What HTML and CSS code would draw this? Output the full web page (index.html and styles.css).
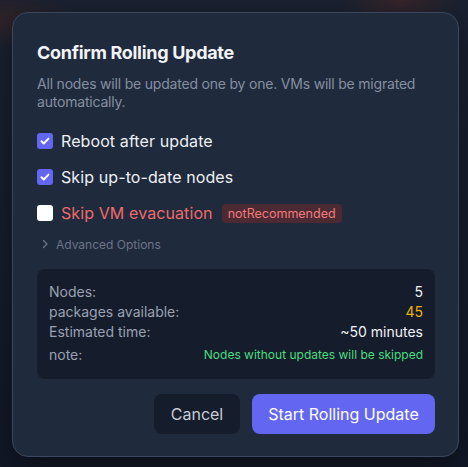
FILE: index.html
```html
<!DOCTYPE html>
<html>
<head>
<meta charset="utf-8">
<link rel="stylesheet" href="styles.css">
</head>
<body>
<div class="backdrop">
  <div class="dialog">
    <h2 class="title">Confirm Rolling Update</h2>
    <p class="desc">All nodes will be updated one by one. VMs will be migrated automatically.</p>
    <div class="options">
      <label class="opt">
        <span class="box checked"><svg viewBox="0 0 16 16" width="16" height="16"><path d="M4 8.3l2.6 2.6L12 5.3" fill="none" stroke="#fff" stroke-width="2.2" stroke-linecap="round" stroke-linejoin="round"/></svg></span>
        <span class="opt-label">Reboot after update</span>
      </label>
      <label class="opt">
        <span class="box checked"><svg viewBox="0 0 16 16" width="16" height="16"><path d="M4 8.3l2.6 2.6L12 5.3" fill="none" stroke="#fff" stroke-width="2.2" stroke-linecap="round" stroke-linejoin="round"/></svg></span>
        <span class="opt-label">Skip up-to-date nodes</span>
      </label>
      <label class="opt">
        <span class="box"></span>
        <span class="opt-label danger">Skip VM evacuation</span>
        <span class="badge">notRecommended</span>
      </label>
    </div>
    <div class="advanced">
      <svg viewBox="0 0 10 10" width="10" height="10"><path d="M3.5 1.5L7 5l-3.5 3.5" fill="none" stroke="#6b7588" stroke-width="1.3" stroke-linecap="round" stroke-linejoin="round"/></svg>
      <span>Advanced Options</span>
    </div>
    <div class="summary">
      <div class="row"><span>Nodes:</span><span class="val">5</span></div>
      <div class="row"><span>packages available:</span><span class="val warn">45</span></div>
      <div class="row"><span>Estimated time:</span><span class="val">~50 minutes</span></div>
      <div class="row note"><span>note:</span><span class="val ok">Nodes without updates will be skipped</span></div>
    </div>
    <div class="actions">
      <button class="btn cancel">Cancel</button>
      <button class="btn primary">Start Rolling Update</button>
    </div>
  </div>
</div>
</body>
</html>
```
FILE: styles.css
```css
* { box-sizing: border-box; }
html, body { margin: 0; padding: 0; }
body {
  width: 468px;
  height: 467px;
  overflow: hidden;
  font-family: Inter, "Noto Sans", sans-serif;
  background: #131a29;
}
.backdrop {
  width: 468px;
  height: 467px;
  padding: 12px 9px 10px 12px;
  background:
    radial-gradient(ellipse 60px 30px at 400px 0px, rgba(90,40,30,0.45), transparent),
    radial-gradient(ellipse 80px 30px at 0px 20px, rgba(70,35,30,0.5), transparent),
    linear-gradient(#1a2131, #121827);
}
.dialog {
  height: 100%;
  background: #1f2a3d;
  border: 1px solid #3a475c;
  border-radius: 16px;
  padding: 28px 23px 24px 24px;
  box-shadow: 0 10px 30px rgba(0,0,0,0.4);
}
.title {
  margin: 0;
  font-size: 18px;
  font-weight: 700;
  color: #f1f3f6;
  letter-spacing: -0.3px;
  line-height: 24px;
}
.desc {
  margin: 10px 0 0;
  font-size: 14px;
  line-height: 18px;
  color: #858fa0;
  letter-spacing: -0.2px;
}
.options {
  margin-top: 18px;
  display: flex;
  flex-direction: column;
  gap: 12px;
}
.opt {
  display: flex;
  align-items: center;
  height: 24px;
  gap: 8px;
}
.box {
  width: 16px;
  height: 16px;
  border-radius: 3px;
  background: #ffffff;
  display: flex;
  align-items: center;
  justify-content: center;
}
.box.checked { background: #6366f1; }
.box svg { width: 14px; height: 14px; }
.opt-label {
  font-size: 16px;
  color: #eef0f4;
  letter-spacing: 0.1px;
}
.opt-label.danger { color: #f06a6a; }
.badge {
  margin-left: 1px;
  background: #4b2a34;
  color: #f47a7a;
  font-size: 12.5px;
  line-height: 15px;
  padding: 2px 6px;
  border-radius: 4px;
}
.advanced {
  margin-top: 10px;
  display: flex;
  align-items: center;
  gap: 6px;
  padding-left: 3px;
  font-size: 12px;
  color: #6b7588;
  height: 18px;
}
.summary {
  margin-top: 16px;
  background: #151c2c;
  border-radius: 8px;
  padding: 13px 12px 14px 12px;
  display: flex;
  flex-direction: column;
}
.row {
  display: flex;
  justify-content: space-between;
  align-items: center;
  font-size: 14px;
  line-height: 20px;
  color: #9aa2b1;
}
.row .val { color: #f1f3f6; }
.row .val.warn { color: #eab308; }
.row.note { margin-top: 3px; align-items: flex-end; }
.row .val.ok { color: #4ade80; font-size: 12px; }
.actions {
  margin-top: 15px;
  display: flex;
  justify-content: flex-end;
  gap: 12px;
}
.btn {
  height: 40px;
  border: none;
  border-radius: 8px;
  font-family: inherit;
  font-size: 16px;
  padding: 0 16px;
}
.cancel { background: #151c2c; color: #c7ccd5; width: 86px; }
.primary { background: #6366f1; color: #ffffff; width: 183px; }
```
